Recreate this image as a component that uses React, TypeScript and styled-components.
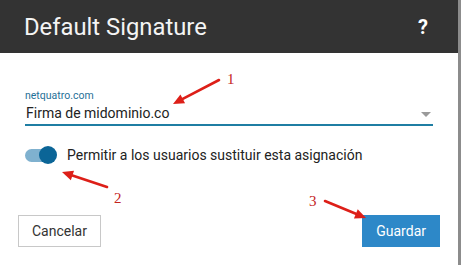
import React from 'react';
import styled, { createGlobalStyle } from 'styled-components';

const GlobalStyle = createGlobalStyle`
  html, body {
    margin: 0;
    padding: 0;
    background: #fff;
    font-family: Roboto, "Liberation Sans", Arial, sans-serif;
  }
`;

const Page = styled.div`
  position: relative;
  width: 461px;
  height: 265px;
  overflow: hidden;
  display: flex;
`;

const Dialog = styled.div`
  width: 458px;
  height: 265px;
  display: flex;
  flex-direction: column;
  background: #fff;
  border-right: 3px solid #8c8c8c;
`;

const Header = styled.div`
  height: 53px;
  flex: none;
  background: #333333;
  display: flex;
  align-items: center;
  justify-content: space-between;
  padding: 0 30px 0 24px;
`;

const Title = styled.h1`
  margin: 0;
  font-size: 23.8px;
  font-weight: 400;
  color: #f4f4f4;
`;

const Help = styled.span`
  font-size: 20px;
  font-weight: 700;
  color: #fff;
`;

const Body = styled.div`
  padding: 35px 25px 0 25px;
  display: flex;
  flex-direction: column;
`;

const Field = styled.div`
  width: 408px;
  display: flex;
  flex-direction: column;
  border-bottom: 2px solid #1f7ea3;
`;

const FieldLabel = styled.label`
  font-size: 10.5px;
  line-height: 13px;
  margin-top: 1px;
  color: #1f7097;
`;

const SelectRow = styled.div`
  display: flex;
  align-items: center;
  justify-content: space-between;
  height: 22px;
  padding-right: 2px;
`;

const SelectValue = styled.span`
  font-size: 14px;
  color: #222;
  padding-left: 1px;
  padding-bottom: 1px;
`;

const Caret = styled.span`
  width: 0;
  height: 0;
  border-left: 5px solid transparent;
  border-right: 5px solid transparent;
  border-top: 5px solid #9a9a9a;
  margin-top: 2px;
`;

const ToggleRow = styled.div`
  display: flex;
  align-items: center;
  gap: 8px;
  margin-top: 19px;
  height: 20px;
`;

const Switch = styled.span<{ on: boolean }>`
  position: relative;
  width: 34px;
  height: 18px;
  display: flex;
  align-items: center;

  &::before {
    content: '';
    width: 28px;
    height: 13px;
    border-radius: 7px;
    background: ${p => (p.on ? '#7fb1cf' : '#bbb')};
  }

  &::after {
    content: '';
    position: absolute;
    top: 0;
    left: ${p => (p.on ? '14px' : '0')};
    width: 18px;
    height: 18px;
    border-radius: 50%;
    background: ${p => (p.on ? '#0b6597' : '#f5f5f5')};
  }
`;

const ToggleLabel = styled.span`
  font-size: 14px;
  color: #222;
`;

const Footer = styled.div`
  margin-top: auto;
  margin-bottom: 18px;
  padding: 0 18px;
  display: flex;
  justify-content: space-between;
  align-items: center;
`;

const Button = styled.button<{ primary?: boolean }>`
  font-family: inherit;
  font-size: 14px;
  height: 32px;
  padding: 0 13px;
  border-radius: 0;
  cursor: pointer;
  color: ${p => (p.primary ? '#fff' : '#333')};
  background: ${p => (p.primary ? '#2d88c8' : '#fff')};
  border: 1px solid ${p => (p.primary ? '#2d88c8' : '#c8c8c8')};
`;

const Annotations = styled.svg`
  position: absolute;
  left: 0;
  top: 0;
  pointer-events: none;
`;

const Num = styled.text`
  font-family: "Liberation Serif", "DejaVu Serif", serif;
  font-size: 15px;
  fill: #c4231d;
`;

type ArrowProps = { x1: number; y1: number; x2: number; y2: number };

const Arrow = ({ x1, y1, x2, y2 }: ArrowProps) => {
  const a = Math.atan2(y2 - y1, x2 - x1);
  const len = 11;
  const w = 5;
  const bx = x2 - len * Math.cos(a);
  const by = y2 - len * Math.sin(a);
  const px = -Math.sin(a) * w;
  const py = Math.cos(a) * w;
  return (
    <g>
      <line x1={x1} y1={y1} x2={bx} y2={by} stroke="#dd1f18" strokeWidth={2.6} strokeLinecap="round" />
      <polygon points={`${x2},${y2} ${bx + px},${by + py} ${bx - px},${by - py}`} fill="#dd1f18" />
    </g>
  );
};

const App = () => (
  <>
    <GlobalStyle />
    <Page>
      <Dialog>
        <Header>
          <Title>Default Signature</Title>
          <Help>?</Help>
        </Header>
        <Body>
          <Field>
            <FieldLabel>netquatro.com</FieldLabel>
            <SelectRow>
              <SelectValue>Firma de midominio.co</SelectValue>
              <Caret />
            </SelectRow>
          </Field>
          <ToggleRow>
            <Switch on />
            <ToggleLabel>Permitir a los usuarios sustituir esta asignación</ToggleLabel>
          </ToggleRow>
        </Body>
        <Footer>
          <Button>Cancelar</Button>
          <Button primary>Guardar</Button>
        </Footer>
      </Dialog>
      <Annotations width={461} height={265}>
        <Arrow x1={219} y1={80} x2={173} y2={104} />
        <Num x={227} y={84}>1</Num>
        <Arrow x1={107} y1={187} x2={62} y2={172} />
        <Num x={114} y={203}>2</Num>
        <Arrow x1={325} y1={201} x2={366} y2={218} />
        <Num x={309} y={206}>3</Num>
      </Annotations>
    </Page>
  </>
);

export default App;
